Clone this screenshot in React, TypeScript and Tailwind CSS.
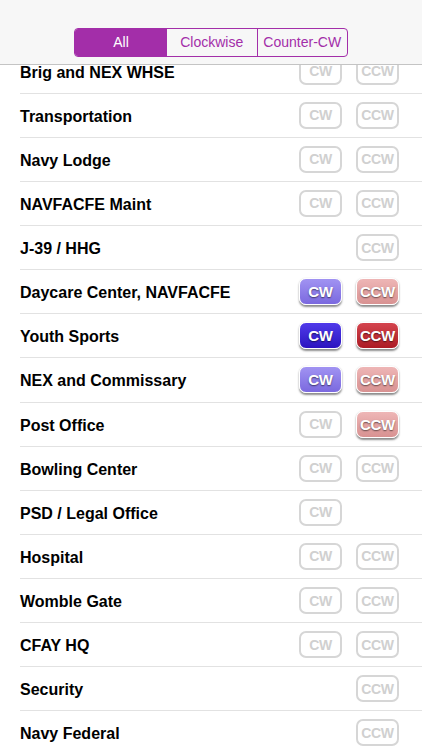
import React from "react";

type S = "none" | "off" | "light" | "dark";

const rows: { name: string; cw: S; ccw: S }[] = [
  { name: "Brig and NEX WHSE", cw: "off", ccw: "off" },
  { name: "Transportation", cw: "off", ccw: "off" },
  { name: "Navy Lodge", cw: "off", ccw: "off" },
  { name: "NAVFACFE Maint", cw: "off", ccw: "off" },
  { name: "J-39 / HHG", cw: "none", ccw: "off" },
  { name: "Daycare Center, NAVFACFE", cw: "light", ccw: "light" },
  { name: "Youth Sports", cw: "dark", ccw: "dark" },
  { name: "NEX and Commissary", cw: "light", ccw: "light" },
  { name: "Post Office", cw: "off", ccw: "light" },
  { name: "Bowling Center", cw: "off", ccw: "off" },
  { name: "PSD / Legal Office", cw: "off", ccw: "none" },
  { name: "Hospital", cw: "off", ccw: "off" },
  { name: "Womble Gate", cw: "off", ccw: "off" },
  { name: "CFAY HQ", cw: "off", ccw: "off" },
  { name: "Security", cw: "none", ccw: "off" },
  { name: "Navy Federal", cw: "none", ccw: "off" },
];

function Btn({ label, state, kind }: { label: string; state: S; kind: "cw" | "ccw" }) {
  if (state === "none") return <div className="w-[43px] h-[27px]" />;
  if (state === "off") {
    return (
      <div className="w-[43px] h-[27px] rounded-[7px] border-2 border-[#d6d6d6] flex items-center justify-center text-[14px] font-bold text-[#d0d0d0] leading-none tracking-[-0.3px]">
        {label}
      </div>
    );
  }
  let cls = "";
  if (kind === "cw" && state === "light") cls = "bg-gradient-to-b from-[#a193f2] to-[#7b69df]";
  if (kind === "cw" && state === "dark") cls = "bg-gradient-to-b from-[#5039ea] to-[#2c12c0]";
  if (kind === "ccw" && state === "light") cls = "bg-gradient-to-b from-[#eeb6b6] to-[#d89292]";
  if (kind === "ccw" && state === "dark") cls = "bg-gradient-to-b from-[#d4444e] to-[#ac1a24]";
  return (
    <div
      className={`w-[43px] h-[27px] rounded-[7px] border border-white shadow-[0_1.5px_2px_rgba(0,0,0,0.45)] flex items-center justify-center text-[15px] font-bold text-white leading-none tracking-[-0.3px] [text-shadow:0_1px_1.5px_rgba(0,0,0,0.55)] ${cls}`}
    >
      {label}
    </div>
  );
}

export default function App() {
  return (
    <div
      className="relative w-[422px] h-[750px] overflow-hidden bg-white"
      style={{ fontFamily: '"Liberation Sans", Arial, sans-serif' }}
    >
      <div className="pt-[49.5px]">
        {rows.map((r) => (
          <div key={r.name} className="pl-[20px] h-[44.13px]">
            <div className="h-full flex items-center border-b border-[#e2e2e2] pr-[23px]">
              <div className="flex-1 pt-[3px] text-[16px] font-bold text-black">{r.name}</div>
              <div className="flex items-center gap-[14px]">
                <Btn label="CW" state={r.cw} kind="cw" />
                <Btn label="CCW" state={r.ccw} kind="ccw" />
              </div>
            </div>
          </div>
        ))}
      </div>
      <div className="absolute top-0 left-0 right-0 h-[65px] bg-[#f7f7f7] border-b border-[#c4c4c4] flex justify-center pt-[28px]">
        <div className="flex h-[29px] w-[274px] rounded-[4px] border border-[#a32ea9] overflow-hidden text-[14px]">
          <div className="w-[92px] flex items-center justify-center bg-[#a32ea9] text-white">All</div>
          <div className="flex-1 flex items-center justify-center text-[#a32ea9] border-r border-[#a32ea9]">Clockwise</div>
          <div className="flex-1 flex items-center justify-center text-[#a32ea9]">Counter-CW</div>
        </div>
      </div>
    </div>
  );
}
